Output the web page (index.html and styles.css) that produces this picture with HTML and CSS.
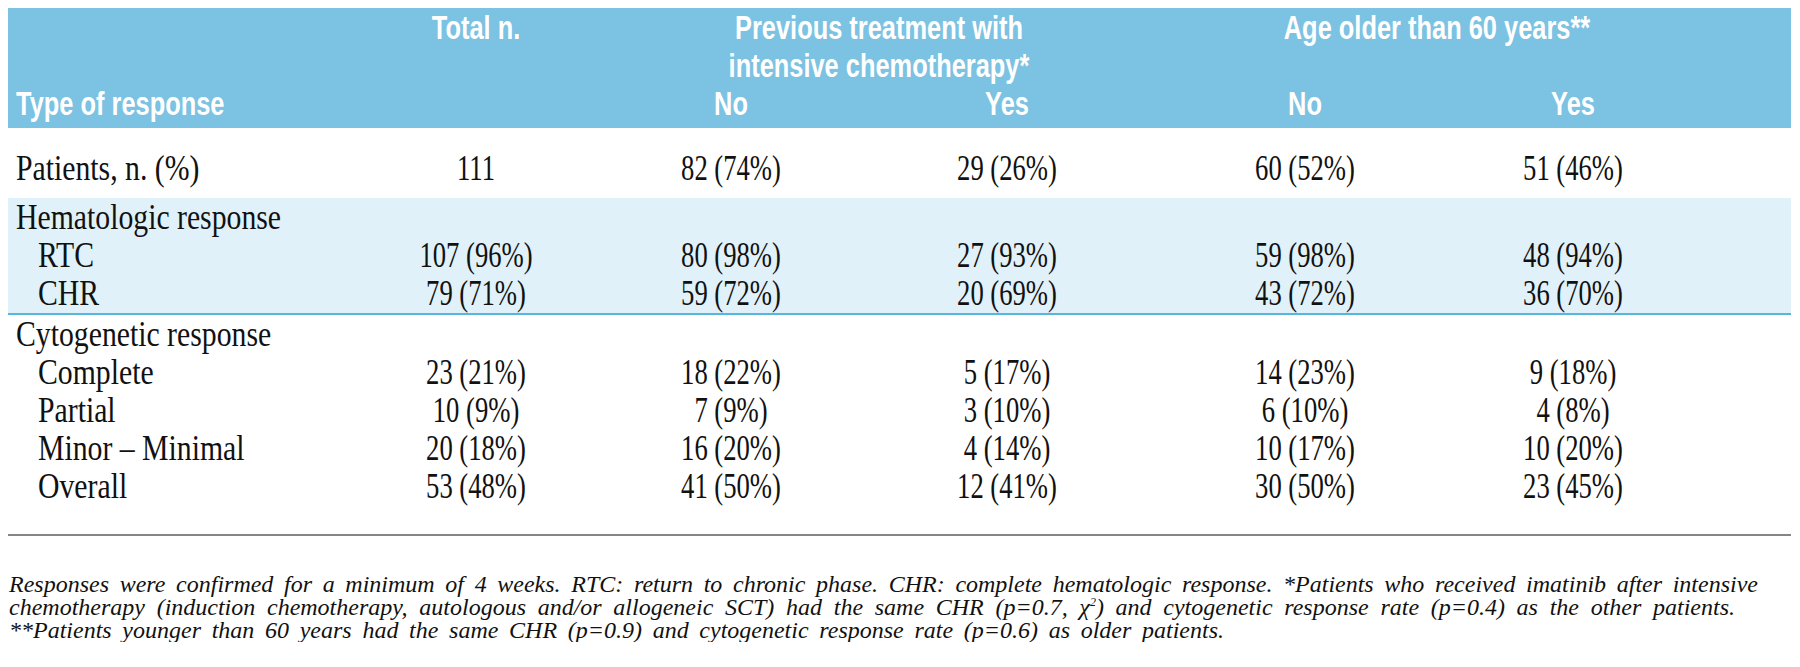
FILE: index.html
```html
<!DOCTYPE html>
<html lang="en">
<head>
<meta charset="utf-8">
<title>Type of response</title>
<link rel="stylesheet" href="styles.css">
</head>
<body>
<div class="table">
  <div class="thead">
    <div class="th h-total">Total n.</div>
    <div class="th h-prev">Previous treatment with<br>intensive chemotherapy*</div>
    <div class="th h-age">Age older than 60 years**</div>
    <div class="th h-type">Type of response</div>
    <div class="th h-sub c3">No</div>
    <div class="th h-sub c4">Yes</div>
    <div class="th h-sub c5">No</div>
    <div class="th h-sub c6">Yes</div>
  </div>

  <div class="section sec-patients">
    <div class="row">
      <div class="label">Patients, n. (%)</div>
      <div class="num">111</div>
      <div class="num">82 (74%)</div>
      <div class="num">29 (26%)</div>
      <div class="num">60 (52%)</div>
      <div class="num">51 (46%)</div>
    </div>
  </div>

  <div class="section sec-hema">
    <div class="row">
      <div class="label">Hematologic response</div>
    </div>
    <div class="row">
      <div class="label sub">RTC</div>
      <div class="num">107 (96%)</div>
      <div class="num">80 (98%)</div>
      <div class="num">27 (93%)</div>
      <div class="num">59 (98%)</div>
      <div class="num">48 (94%)</div>
    </div>
    <div class="row">
      <div class="label sub">CHR</div>
      <div class="num">79 (71%)</div>
      <div class="num">59 (72%)</div>
      <div class="num">20 (69%)</div>
      <div class="num">43 (72%)</div>
      <div class="num">36 (70%)</div>
    </div>
  </div>

  <div class="section sec-cyto">
    <div class="row">
      <div class="label">Cytogenetic response</div>
    </div>
    <div class="row">
      <div class="label sub">Complete</div>
      <div class="num">23 (21%)</div>
      <div class="num">18 (22%)</div>
      <div class="num">5 (17%)</div>
      <div class="num">14 (23%)</div>
      <div class="num">9 (18%)</div>
    </div>
    <div class="row">
      <div class="label sub">Partial</div>
      <div class="num">10 (9%)</div>
      <div class="num">7 (9%)</div>
      <div class="num">3 (10%)</div>
      <div class="num">6 (10%)</div>
      <div class="num">4 (8%)</div>
    </div>
    <div class="row">
      <div class="label sub">Minor – Minimal</div>
      <div class="num">20 (18%)</div>
      <div class="num">16 (20%)</div>
      <div class="num">4 (14%)</div>
      <div class="num">10 (17%)</div>
      <div class="num">10 (20%)</div>
    </div>
    <div class="row">
      <div class="label sub">Overall</div>
      <div class="num">53 (48%)</div>
      <div class="num">41 (50%)</div>
      <div class="num">12 (41%)</div>
      <div class="num">30 (50%)</div>
      <div class="num">23 (45%)</div>
    </div>
  </div>

  <div class="notes">
    <p class="nl nl1">Responses were confirmed for a minimum of 4 weeks. RTC: return to chronic phase. CHR: complete hematologic response. *Patients who received imatinib after intensive</p>
    <p class="nl nl2">chemotherapy (induction chemotherapy, autologous and/or allogeneic SCT) had the same CHR (p=0.7, χ<sup>2</sup>) and cytogenetic response rate (p=0.4) as the other patients.</p>
    <p class="nl nl3">**Patients younger than 60 years had the same CHR (p=0.9) and cytogenetic response rate (p=0.6) as older patients.</p>
  </div>
</div>
</body>
</html>
```

FILE: styles.css
```css
html, body {
  margin: 0;
  padding: 0;
  background: #ffffff;
}

.table {
  margin: 8px 0 0 8px;
  width: 1783px;
  color: #111111;
}

.thead,
.row {
  display: grid;
  grid-template-columns: 348px 240px 270px 282px 314px 222px 1fr;
}

/* ---------- header ---------- */
.thead {
  background: #7cc2e2;
  color: #ffffff;
  grid-template-rows: 38px 38px 38px;
  padding: 1px 0 5px;
  font-family: "Liberation Sans", Arial, sans-serif;
  font-weight: bold;
  font-size: 33px;
  line-height: 38px;
}

.th {
  text-align: center;
  white-space: nowrap;
  transform: scaleX(0.77);
  transform-origin: 50% 50%;
}

.h-total { grid-column: 2; grid-row: 1; }
.h-prev { grid-column: 3 / span 2; grid-row: 1 / span 2; padding-left: 14px; transform-origin: calc(50% + 7px) 50%; }
.h-age { grid-column: 5 / span 2; grid-row: 1; padding-left: 42px; transform-origin: calc(50% + 21px) 50%; }
.h-type { grid-column: 1; grid-row: 3; text-align: left; padding-left: 8px; transform-origin: 8px 50%; }
.h-sub { grid-row: 3; }
.c3 { grid-column: 3; }
.c4 { grid-column: 4; }
.c5 { grid-column: 5; }
.c6 { grid-column: 6; }

/* ---------- body ---------- */
.section {
  font-family: "Liberation Serif", "Times New Roman", serif;
  font-size: 36px;
  line-height: 38px;
}

.sec-patients {
  padding: 21px 0 11px;
}

.sec-hema {
  background: #e1f1fa;
  padding: 0 0 1px;
  border-bottom: 2px solid #56b6e0;
}

.sec-cyto {
  padding: 0 0 29px;
  border-bottom: 2px solid #858585;
}

.label {
  padding-left: 8px;
  white-space: nowrap;
  transform: scaleX(0.826);
  transform-origin: 8px 50%;
}

.label.sub {
  padding-left: 30px;
  transform-origin: 30px 50%;
}

.num {
  text-align: center;
  white-space: nowrap;
  transform: scaleX(0.74);
  transform-origin: 50% 50%;
}

/* ---------- footnotes ---------- */
.notes {
  margin: 37px 0 0 1px;
  font-family: "Liberation Serif", "Times New Roman", serif;
  font-style: italic;
  font-size: 24px;
  line-height: 23px;
  color: #111111;
}

.nl {
  margin: 0;
  white-space: nowrap;
  text-align: justify;
  text-align-last: justify;
}

.nl1 { width: 1749px; }
.nl2 { width: 1726px; }
.nl3 { width: 1215px; }

.nl sup {
  font-size: 12px;
  line-height: 0;
  vertical-align: 9px;
}
```
